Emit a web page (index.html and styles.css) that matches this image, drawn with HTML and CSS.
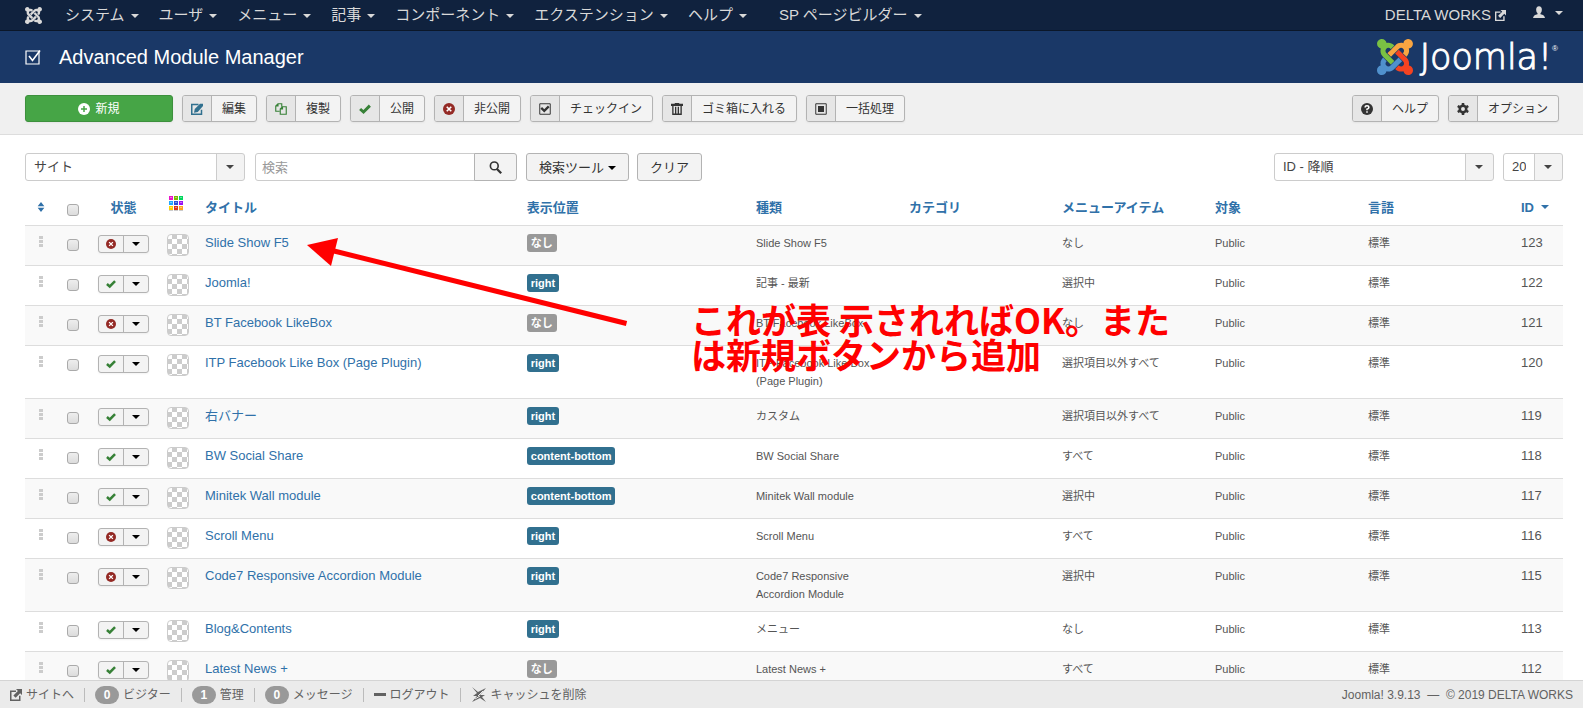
FILE: index.html
```
<!DOCTYPE html>
<html lang="ja">
  <head>
    <meta charset="utf-8">
    <meta name="viewport" content="width=device-width, initial-scale=1">
    <link rel="stylesheet" href="styles.css">
    <title>Advanced Module Manager</title>
  </head>
  <body>
    <!-- icon sprite -->
    <svg class="sprite" aria-hidden="true">
      <symbol id="i-joomla" viewBox="0 32 448 448">
        <path class="jg" d="M.6 92.1C.6 58.8 27.4 32 60.4 32c30 0 54.5 21.9 59.2 50.2 32.6-7.6 67.1.6 96.5 30l-44.3 44.3c-20.5-20.5-42.6-16.3-55.4-3.5-14.3 14.3-14.3 37.9 0 52.2l99.5 99.5-44 44.3c-87.7-87.2-49.7-49.7-99.8-99.7-26.8-26.5-35-64.8-24.8-98.9C20.4 144.6.6 120.7.6 92.1z"/>
        <path class="jo" d="M130.1 208.5l44.3 44.3c10-10 89.7-89.7 99.7-99.8 14.3-14.3 37.6-14.3 51.9 0 12.8 12.8 17 35-3.5 55.4l44 44.3c31.2-31.2 38.5-67.6 28.9-101.2 29.2-4.1 51.9-29.2 51.9-59.5 0-33.2-26.8-60.1-59.8-60.1-30.3 0-55.4 22.5-59.5 51.6-33.8-9.9-71.7-1.5-98.3 25.1-18.3 19.1-71.1 71.5-99.6 99.9z"/>
        <path class="jr" d="M396.4 360.7c8.2-32.7-.9-68.5-26.3-93.9-11.8-12.2 5 4.7-99.5-99.7l-44.3 44.3 99.7 99.7c14.3 14.3 14.3 37.6 0 51.9-12.8 12.8-35 17-55.4-3.5l-44 44.3c27.6 30.2 68 38.8 102.7 28 5.5 27.4 29.7 48.1 58.9 48.1 33 0 59.8-26.8 59.8-60.1 0-30.2-22.5-55-51.6-59.1z"/>
        <path class="jb" d="M312.1 307.6l-44-44.3c-87 86.4-50.4 50.4-99.7 99.8-14.3 14.3-37.6 14.3-51.9 0-13.1-13.4-16.9-35.3 3.2-55.4l-44-44.3c-30.2 30.2-38 65.2-29.5 98.3-26.7 6-46.2 29.9-46.2 58.2C0 453.2 26.8 480 59.8 480c28.6 0 52.5-19.8 58.6-46.7 32.7 8.2 68.5-.6 94.2-26 32.1-32 12.2-12.4 99.5-99.7z"/>
      </symbol>
      <symbol id="i-box" viewBox="0 0 16 16">
        <path fill="none" stroke="currentColor" stroke-width="1.2" d="M1 2h13v13H1z"/>
        <path fill="none" stroke="currentColor" stroke-width="1.6" d="M4 7l3.5 4.5L15 1.5"/>
      </symbol>
      <symbol id="i-plus" viewBox="0 0 16 16">
        <circle cx="8" cy="8" r="8" fill="currentColor"/>
        <path stroke="#46a546" stroke-width="2" d="M8 4v8M4 8h8"/>
      </symbol>
      <symbol id="i-edit" viewBox="0 0 16 16">
        <path fill="none" stroke="currentColor" stroke-width="2" d="M10 2H1v13h13V9"/>
        <path fill="currentColor" d="M4 13l1-5 7-7h4v3l-7 8z"/>
      </symbol>
      <symbol id="i-copy" viewBox="0 0 16 16">
        <path fill="none" stroke="currentColor" stroke-width="1.5" d="M6 11H1V4l3-3h5v4M4 1v3H1M7 8l3-3h5v10H7zM10 5v3H7"/>
      </symbol>
      <symbol id="i-check" viewBox="0 0 16 16">
        <path fill="none" stroke="currentColor" stroke-width="4" d="M1.5 8l4.5 4L14.5 3.5"/>
      </symbol>
      <symbol id="i-x" viewBox="0 0 16 16">
        <circle cx="8" cy="8" r="8" fill="currentColor"/>
        <path stroke="#fff" stroke-width="2.2" d="M5 5l6 6M11 5l-6 6"/>
      </symbol>
      <symbol id="i-checkin" viewBox="0 0 16 16">
        <path fill="none" stroke="currentColor" stroke-width="1.3" d="M1 1h14v14H1z"/>
        <path fill="none" stroke="currentColor" stroke-width="3" d="M3 6.5l4 4L13 4.5"/>
      </symbol>
      <symbol id="i-trash" viewBox="0 0 16 16">
        <path fill="currentColor" d="M5 0h6v1h5v3H0V1h5z"/>
        <path fill="none" stroke="currentColor" stroke-width="1.8" d="M2.500 4v11h11V4M6.200 5v9M9.800 5v9"/>
      </symbol>
      <symbol id="i-batch" viewBox="0 0 16 16">
        <path fill="none" stroke="currentColor" stroke-width="1.3" d="M1 1h14v14H1z"/>
        <path fill="currentColor" d="M4 4h8v8H4z"/>
      </symbol>
      <symbol id="i-help" viewBox="0 0 16 16">
        <circle cx="8" cy="8" r="8" fill="currentColor"/>
        <path fill="none" stroke="#fff" stroke-width="2" d="M5.5 6q0-2.300 2.500-2.300T10.500 6Q10.500 7.500 8 8.200v1.300M8 11v2"/>
      </symbol>
      <symbol id="i-gear" viewBox="0 0 16 16">
        <circle cx="8" cy="8" r="4.3" fill="none" stroke="currentColor" stroke-width="3.4"/>
        <path stroke="currentColor" stroke-width="3.4" d="M8 0v3M8 13v3M1 4l2.500 1.500M12.500 10.500L15 12M1 12l2.500-1.500M12.500 5.500L15 4"/>
      </symbol>
      <symbol id="i-search" viewBox="0 0 16 16">
        <circle cx="6.500" cy="6" r="4.800" fill="none" stroke="currentColor" stroke-width="2"/>
        <path stroke="currentColor" stroke-width="2.800" d="M9.500 9.500L15 15"/>
      </symbol>
      <symbol id="i-out" viewBox="0 0 16 16">
        <path fill="none" stroke="currentColor" stroke-width="2" d="M8 3H1v12h12V9"/>
        <path fill="currentColor" d="M8 0h8v8l-2.500-2.500-6 6-3-3 6-6z"/>
      </symbol>
      <symbol id="i-user" viewBox="0 0 16 16">
        <ellipse cx="8" cy="5" rx="3.800" ry="4.800" fill="currentColor"/>
        <path fill="currentColor" d="M6 8h4v3q5.500 1 6 5H0q.5-4 6-5z"/>
      </symbol>
      <symbol id="i-bolt" viewBox="0 0 16 16">
        <path fill="currentColor" d="M1 0l6 5 8-4-6 7h5l-3 2 4 5-6-4-8 4 5-6H2l4-3z"/>
        <path stroke="#ebebeb" d="M7 9L12 4M4 12L9 9"/>
      </symbol>
      <symbol id="i-sort" viewBox="0 0 8 12">
        <path fill="currentColor" d="M0 5l4-5 4 5zM0 7h8l-4 5z"/>
      </symbol>
    </svg>

    <nav class="navbar">
      <a class="brand" href="#" aria-label="Joomla"><svg class="icon-17"><use href="#i-joomla"/></svg></a>
      <ul class="nav">
        <li><a href="#">システム<b class="caret"></b></a></li>
        <li><a href="#">ユーザ<b class="caret"></b></a></li>
        <li><a href="#">メニュー<b class="caret"></b></a></li>
        <li><a href="#">記事<b class="caret"></b></a></li>
        <li><a href="#">コンポーネント<b class="caret"></b></a></li>
        <li><a href="#">エクステンション<b class="caret"></b></a></li>
        <li><a href="#">ヘルプ<b class="caret"></b></a></li>
      </ul>
      <ul class="nav nav-extra">
        <li><a href="#">SP ページビルダー<b class="caret"></b></a></li>
      </ul>
      <ul class="nav nav-right">
        <li><a href="#">DELTA WORKS <svg class="icon-11"><use href="#i-out"/></svg></a></li>
        <li><a href="#" aria-label="User"><svg class="icon-12"><use href="#i-user"/></svg><b class="caret"></b></a></li>
      </ul>
    </nav>

    <header class="header">
      <svg class="icon-16"><use href="#i-box"/></svg>
      <h1>Advanced Module Manager</h1>
      <a class="logo" href="#"><svg class="icon-36"><use href="#i-joomla"/></svg><span class="wordmark">Joomla!</span><sup>®</sup></a>
    </header>

    <div class="toolbar">
      <button class="btn-new"><svg class="icon-12"><use href="#i-plus"/></svg>新規</button>
      <button class="btn"><span class="ico blue"><svg class="icon-12"><use href="#i-edit"/></svg></span><span class="txt">編集</span></button>
      <button class="btn"><span class="ico green"><svg class="icon-12"><use href="#i-copy"/></svg></span><span class="txt">複製</span></button>
      <button class="btn"><span class="ico green"><svg class="icon-12"><use href="#i-check"/></svg></span><span class="txt">公開</span></button>
      <button class="btn"><span class="ico red"><svg class="icon-12"><use href="#i-x"/></svg></span><span class="txt">非公開</span></button>
      <button class="btn"><span class="ico"><svg class="icon-12"><use href="#i-checkin"/></svg></span><span class="txt">チェックイン</span></button>
      <button class="btn"><span class="ico"><svg class="icon-12"><use href="#i-trash"/></svg></span><span class="txt">ゴミ箱に入れる</span></button>
      <button class="btn"><span class="ico"><svg class="icon-12"><use href="#i-batch"/></svg></span><span class="txt">一括処理</span></button>
      <button class="btn push"><span class="ico"><svg class="icon-12"><use href="#i-help"/></svg></span><span class="txt">ヘルプ</span></button>
      <button class="btn"><span class="ico"><svg class="icon-12"><use href="#i-gear"/></svg></span><span class="txt">オプション</span></button>
    </div>

    <main class="content">
      <form class="filters">
        <select class="select-wide" aria-label="サイト"><option>サイト</option></select>
        <div class="search">
          <input type="text" placeholder="検索" aria-label="検索">
          <button type="button" aria-label="検索"><svg class="icon-13"><use href="#i-search"/></svg></button>
        </div>
        <div class="filter-buttons">
          <button type="button" class="btn-filter">検索ツール<b class="caret"></b></button>
          <button type="button" class="btn-filter">クリア</button>
        </div>
        <select class="select-wide push" aria-label="並び順"><option>ID - 降順</option></select>
        <select class="select-limit" aria-label="表示件数"><option>20</option></select>
      </form>

      <table class="modules">
        <colgroup>
          <col class="c-drag"><col class="c-check"><col class="c-state"><col class="c-color"><col>
          <col class="c-pos"><col class="c-info"><col class="c-info"><col class="c-info"><col class="c-info"><col class="c-info"><col class="c-id">
        </colgroup>
        <thead>
          <tr>
            <th class="center"><a href="#" aria-label="並べ替え"><svg class="sort"><use href="#i-sort"/></svg></a></th>
            <th class="center"><input type="checkbox" aria-label="すべて選択"></th>
            <th class="center"><a href="#">状態</a></th>
            <th class="center">
              <svg class="palette" viewBox="0 0 14 15">
                <path fill="#e815c8" d="M0 0h4v4H0z"/><path fill="#7ab800" d="M5 0h4v4H5z"/><path fill="#00d65c" d="M10 0h4v4h-4z"/>
                <path fill="#1fa8ff" d="M0 5h4v4H0z"/><path fill="#2a4fd8" d="M5 5h4v4H5z"/><path fill="#9b13f0" d="M10 5h4v4h-4z"/>
                <path fill="#ffd000" d="M0 10h4v4H0z"/><path fill="#d8341c" d="M5 10h4v4H5z"/><path fill="#ffa41c" d="M10 10h4v4h-4z"/>
                <path stroke="#fff" stroke-opacity=".4" d="M1 1.500h2M6 1.500h2M11 1.500h2M1 6.500h2M6 6.500h2M11 6.500h2M1 11.500h2M6 11.500h2M11 11.500h2"/>
                <path stroke="#ccc" d="M0 14.500h4M5 14.500h4M10 14.500h4"/>
              </svg>
            </th>
            <th><a href="#">タイトル</a></th>
            <th><a href="#">表示位置</a></th>
            <th><a href="#">種類</a></th>
            <th><a href="#">カテゴリ</a></th>
            <th><a href="#">メニューアイテム</a></th>
            <th><a href="#">対象</a></th>
            <th><a href="#">言語</a></th>
            <th><a href="#">ID<b class="caret"></b></a></th>
          </tr>
        </thead>
        <tbody>
          <tr>
            <td class="center"><i class="drag"></i></td>
            <td class="center"><input type="checkbox" aria-label="Slide Show F5"></td>
            <td class="center"><span class="state"><button class="red" aria-label="非公開"><svg class="icon-10"><use href="#i-x"/></svg></button><button aria-label="操作"><b class="caret"></b></button></span></td>
            <td class="center"><i class="color"></i></td>
            <td><a href="#">Slide Show F5</a></td>
            <td><span class="label none">なし</span></td>
            <td class="small">Slide Show F5</td><td></td><td class="small">なし</td><td class="small">Public</td><td class="small">標準</td><td>123</td>
          </tr>
          <tr>
            <td class="center"><i class="drag"></i></td>
            <td class="center"><input type="checkbox" aria-label="Joomla!"></td>
            <td class="center"><span class="state"><button class="green" aria-label="公開"><svg class="icon-10"><use href="#i-check"/></svg></button><button aria-label="操作"><b class="caret"></b></button></span></td>
            <td class="center"><i class="color"></i></td>
            <td><a href="#">Joomla!</a></td>
            <td><span class="label">right</span></td>
            <td class="small">記事 - 最新</td><td></td><td class="small">選択中</td><td class="small">Public</td><td class="small">標準</td><td>122</td>
          </tr>
          <tr>
            <td class="center"><i class="drag"></i></td>
            <td class="center"><input type="checkbox" aria-label="BT Facebook LikeBox"></td>
            <td class="center"><span class="state"><button class="red" aria-label="非公開"><svg class="icon-10"><use href="#i-x"/></svg></button><button aria-label="操作"><b class="caret"></b></button></span></td>
            <td class="center"><i class="color"></i></td>
            <td><a href="#">BT Facebook LikeBox</a></td>
            <td><span class="label none">なし</span></td>
            <td class="small">BT Facebook LikeBox</td><td></td><td class="small">なし</td><td class="small">Public</td><td class="small">標準</td><td>121</td>
          </tr>
          <tr>
            <td class="center"><i class="drag"></i></td>
            <td class="center"><input type="checkbox" aria-label="ITP Facebook Like Box (Page Plugin)"></td>
            <td class="center"><span class="state"><button class="green" aria-label="公開"><svg class="icon-10"><use href="#i-check"/></svg></button><button aria-label="操作"><b class="caret"></b></button></span></td>
            <td class="center"><i class="color"></i></td>
            <td><a href="#">ITP Facebook Like Box (Page Plugin)</a></td>
            <td><span class="label">right</span></td>
            <td class="small">ITP Facebook Like Box (Page Plugin)</td><td></td><td class="small">選択項目以外すべて</td><td class="small">Public</td><td class="small">標準</td><td>120</td>
          </tr>
          <tr>
            <td class="center"><i class="drag"></i></td>
            <td class="center"><input type="checkbox" aria-label="右バナー"></td>
            <td class="center"><span class="state"><button class="green" aria-label="公開"><svg class="icon-10"><use href="#i-check"/></svg></button><button aria-label="操作"><b class="caret"></b></button></span></td>
            <td class="center"><i class="color"></i></td>
            <td><a href="#">右バナー</a></td>
            <td><span class="label">right</span></td>
            <td class="small">カスタム</td><td></td><td class="small">選択項目以外すべて</td><td class="small">Public</td><td class="small">標準</td><td>119</td>
          </tr>
          <tr>
            <td class="center"><i class="drag"></i></td>
            <td class="center"><input type="checkbox" aria-label="BW Social Share"></td>
            <td class="center"><span class="state"><button class="green" aria-label="公開"><svg class="icon-10"><use href="#i-check"/></svg></button><button aria-label="操作"><b class="caret"></b></button></span></td>
            <td class="center"><i class="color"></i></td>
            <td><a href="#">BW Social Share</a></td>
            <td><span class="label">content-bottom</span></td>
            <td class="small">BW Social Share</td><td></td><td class="small">すべて</td><td class="small">Public</td><td class="small">標準</td><td>118</td>
          </tr>
          <tr>
            <td class="center"><i class="drag"></i></td>
            <td class="center"><input type="checkbox" aria-label="Minitek Wall module"></td>
            <td class="center"><span class="state"><button class="green" aria-label="公開"><svg class="icon-10"><use href="#i-check"/></svg></button><button aria-label="操作"><b class="caret"></b></button></span></td>
            <td class="center"><i class="color"></i></td>
            <td><a href="#">Minitek Wall module</a></td>
            <td><span class="label">content-bottom</span></td>
            <td class="small">Minitek Wall module</td><td></td><td class="small">選択中</td><td class="small">Public</td><td class="small">標準</td><td>117</td>
          </tr>
          <tr>
            <td class="center"><i class="drag"></i></td>
            <td class="center"><input type="checkbox" aria-label="Scroll Menu"></td>
            <td class="center"><span class="state"><button class="red" aria-label="非公開"><svg class="icon-10"><use href="#i-x"/></svg></button><button aria-label="操作"><b class="caret"></b></button></span></td>
            <td class="center"><i class="color"></i></td>
            <td><a href="#">Scroll Menu</a></td>
            <td><span class="label">right</span></td>
            <td class="small">Scroll Menu</td><td></td><td class="small">すべて</td><td class="small">Public</td><td class="small">標準</td><td>116</td>
          </tr>
          <tr>
            <td class="center"><i class="drag"></i></td>
            <td class="center"><input type="checkbox" aria-label="Code7 Responsive Accordion Module"></td>
            <td class="center"><span class="state"><button class="red" aria-label="非公開"><svg class="icon-10"><use href="#i-x"/></svg></button><button aria-label="操作"><b class="caret"></b></button></span></td>
            <td class="center"><i class="color"></i></td>
            <td><a href="#">Code7 Responsive Accordion Module</a></td>
            <td><span class="label">right</span></td>
            <td class="small">Code7 Responsive Accordion Module</td><td></td><td class="small">選択中</td><td class="small">Public</td><td class="small">標準</td><td>115</td>
          </tr>
          <tr>
            <td class="center"><i class="drag"></i></td>
            <td class="center"><input type="checkbox" aria-label="Blog&amp;Contents"></td>
            <td class="center"><span class="state"><button class="green" aria-label="公開"><svg class="icon-10"><use href="#i-check"/></svg></button><button aria-label="操作"><b class="caret"></b></button></span></td>
            <td class="center"><i class="color"></i></td>
            <td><a href="#">Blog&amp;Contents</a></td>
            <td><span class="label">right</span></td>
            <td class="small">メニュー</td><td></td><td class="small">なし</td><td class="small">Public</td><td class="small">標準</td><td>113</td>
          </tr>
          <tr>
            <td class="center"><i class="drag"></i></td>
            <td class="center"><input type="checkbox" aria-label="Latest News +"></td>
            <td class="center"><span class="state"><button class="green" aria-label="公開"><svg class="icon-10"><use href="#i-check"/></svg></button><button aria-label="操作"><b class="caret"></b></button></span></td>
            <td class="center"><i class="color"></i></td>
            <td><a href="#">Latest News +</a></td>
            <td><span class="label none">なし</span></td>
            <td class="small">Latest News +</td><td></td><td class="small">すべて</td><td class="small">Public</td><td class="small">標準</td><td>112</td>
          </tr>
        </tbody>
      </table>

      <!-- callout over the list -->
      <svg class="arrow" viewBox="0 0 322 88">
        <path stroke="#f00" stroke-width="5" d="M25 10.500L319.500 83.500"/>
        <path fill="#f00" d="M0 5L31-2 24 26z"/>
      </svg>
      <p class="note">これが表 示されればOK。または新規ボタンから追加</p>
    </main>

    <footer class="status">
      <a href="#"><svg class="icon-12"><use href="#i-out"/></svg>サイトへ</a>
      <span><b class="badge">0</b>ビジター</span>
      <span><b class="badge">1</b>管理</span>
      <a href="#"><b class="badge">0</b>メッセージ</a>
      <a href="#"><i class="minus"></i>ログアウト</a>
      <a href="#"><svg class="icon-16"><use href="#i-bolt"/></svg>キャッシュを削除</a>
      <span class="copy">Joomla! 3.9.13 &nbsp;—&nbsp; © 2019 DELTA WORKS</span>
    </footer>
  </body>
</html>
```
FILE: styles.css
```
* { box-sizing: border-box; }
body {
    margin: 0; height: 100vh; overflow: hidden;
    display: flex; flex-direction: column;
    background: #fff; color: #555;
    font-size: 13px; line-height: 18px;
}
body, button, input, select {
    font-family: "Liberation Sans", "Noto Sans CJK JP", sans-serif;
}
a { color: #3071a9; text-decoration: none; }
ul { margin: 0; padding: 0; list-style: none; }
button, select { cursor: pointer; }
svg { flex: none; }
.sprite { position: absolute; width: 0; height: 0; }
.icon-10 { width: 10px; height: 10px; }
.icon-11 { width: 11px; height: 11px; }
.icon-12 { width: 12px; height: 12px; }
.icon-13 { width: 13px; height: 13px; }
.icon-16 { width: 16px; height: 16px; }
.icon-17 { width: 17px; height: 17px; }
.icon-36 { width: 36px; height: 36px; }
.push { margin-left: auto; }
.center { text-align: center; }
.blue { color: #31708f; }
.green { color: #378137; }
.red { color: #942a25; }
.caret {
    display: inline-block; vertical-align: middle;
    border: 4px solid transparent; border-top-color: currentColor; border-bottom: 0;
}

/* top menu */
.navbar {
    flex: none; display: flex; align-items: center;
    height: 31px; padding: 0 10px 0 25px;
    background: #10223e; border-bottom: 1px solid #0b1729;
}
.navbar a { display: flex; align-items: center; color: #d9d9d9; font-size: 15px; white-space: nowrap; }
.brand { margin-right: 13px; fill: currentColor; }
.nav { display: flex; }
.nav a { padding: 0 10px; }
.nav .caret { margin-left: 6px; margin-top: 2px; }
.nav-extra { margin-left: 12px; }
.nav-right { margin-left: auto; gap: 3px; }
.nav-right svg { margin-left: 4px; }
.nav-right .caret { margin-left: 10px; }

/* page title */
.header {
    flex: none; display: flex; align-items: center;
    height: 52px; padding: 0 25px;
    background: #1a3867; color: #fff;
}
.header h1 { margin: 0 0 0 18px; font-size: 20px; font-weight: normal; }
.logo { display: flex; align-items: center; margin-left: auto; color: #fff; }
.wordmark {
    margin-left: 7px; font-family: "DejaVu Sans", sans-serif;
    font-weight: 200; font-size: 35px; line-height: 36px; -webkit-text-stroke: 1px #fff;
}
.logo sup { align-self: flex-start; font-size: 8px; line-height: 20px; }
.logo .icon-36 { --jg: #7ac143; --jo: #f9a541; --jr: #f44321; --jb: #5091cd; }
.jg { fill: var(--jg, currentColor); }
.jo { fill: var(--jo, currentColor); }
.jr { fill: var(--jr, currentColor); }
.jb { fill: var(--jb, currentColor); }

/* toolbar */
.toolbar {
    flex: none; display: flex; gap: 9px;
    padding: 12px 24px 12px 25px;
    background: #f0f0f0; border-bottom: 1px solid #ddd;
}
.toolbar button {
    display: flex; align-items: stretch; height: 27px; padding: 0;
    border: 1px solid #b3b3b3; border-radius: 3px; background: #f3f3f3; color: #333;
    font-size: 12px; line-height: 26px; white-space: nowrap; overflow: hidden;
    box-shadow: 0 1px 2px rgba(0,0,0,.05);
}
.toolbar .btn-new {
    width: 148px; align-items: center; justify-content: center; gap: 5px;
    background: #46a546; border-color: #3d903d; color: #fff;
}
.ico {
    display: flex; align-items: center; justify-content: center; width: 29px;
    background: #e6e6e6; border-right: 1px solid #b3b3b3;
}
.txt { padding: 0 10px; }

/* list area */
.content { flex: 1; min-height: 0; position: relative; overflow: hidden; padding: 18px 20px 0 25px; }
.filters { display: flex; align-items: center; margin-bottom: 9px; }
select {
    appearance: none; height: 28px; padding: 0 36px 1px 8px;
    border: 1px solid #ccc; border-radius: 3px; color: #444; font-size: 13px;
    background:
        url("data:image/svg+xml,%3Csvg xmlns='http://www.w3.org/2000/svg' width='8' height='4'%3E%3Cpath fill='%23444' d='M0 0h8L4 4z'/%3E%3C/svg%3E") right 10px center no-repeat,
        linear-gradient(#ccc, #ccc) right 27px top / 1px 100% no-repeat,
        linear-gradient(#f3f3f3, #f3f3f3) right top / 27px 100% no-repeat,
        #fff;
}
.select-wide { width: 220px; }
.select-limit { width: 60px; margin-left: 9px; }
.search { display: flex; width: 262px; margin-left: 10px; }
.search input {
    flex: 1; min-width: 0; height: 28px; padding: 0 6px;
    border: 1px solid #ccc; border-radius: 3px 0 0 3px; font-size: 13px;
}
.search input::placeholder { color: #999; }
.search button {
    display: flex; align-items: center; justify-content: center;
    width: 43px; margin-left: -1px; padding: 0;
    border: 1px solid #b3b3b3; border-radius: 0 3px 3px 0; background: #f3f3f3; color: #333;
}
.filter-buttons { display: flex; gap: 8px; margin-left: 9px; }
.btn-filter {
    height: 28px; padding: 0 12px 2px; border: 1px solid #b3b3b3; border-radius: 3px;
    background: #f3f3f3; color: #333; font-size: 13px; white-space: nowrap;
}
.btn-filter .caret { color: #000; margin-left: 4px; }

.modules { width: 100%; table-layout: fixed; border-spacing: 0; }
.c-drag { width: 31px; }
.c-check { width: 33px; }
.c-state { width: 69px; }
.c-color { width: 39px; }
.c-pos { width: 14.9%; }
.c-info { width: 9.95%; }
.c-id { width: 50px; }
.modules th { height: 35px; padding: 9px 8px 8px; text-align: left; vertical-align: top; white-space: nowrap; }
.modules td { height: 40px; padding: 8px; border-top: 1px solid #ddd; vertical-align: top; }
.modules tbody tr:nth-child(odd) td { background: #f9f9f9; }
.modules .center { padding-left: 0; padding-right: 0; text-align: center; }
.modules th .caret { margin: -4px 0 0 7px; }
.small { font-size: 11px; }
.sort { width: 8px; height: 10px; }
.palette { display: block; width: 14px; height: 15px; margin: -3px 0 0 11px; }
input[type="checkbox"] {
    appearance: none; display: block; width: 12px; height: 12px; margin: 5px auto 0;
    border: 1px solid #aaa; border-radius: 3px;
    background: linear-gradient(#eee, #dcdcdc);
}
.drag {
    display: block; width: 4px; height: 11px; margin: 2px 0 0 14px;
    background: repeating-linear-gradient(#ccc 0 3px, transparent 3px 4px);
}
.color {
    display: block; width: 22px; height: 22px; margin: 0 0 0 9px;
    border: 1px solid #ccc; border-radius: 4px;
    background: repeating-conic-gradient(#ccc 0 25%, #fff 0 50%) 0 0 / 10px 10px border-box;
}
.state {
    display: flex; width: 51px; height: 18px; margin: 1px auto 0;
    border: 1px solid #b3b3b3; border-radius: 3px; background: #f3f3f3; overflow: hidden;
    box-shadow: 0 1px 2px rgba(0,0,0,.05);
}
.state button {
    flex: 1; display: flex; align-items: center; justify-content: center;
    padding: 0; border: 0; background: none;
}
.state button + button { border-left: 1px solid #b3b3b3; color: #000; }
.label {
    display: inline-block; height: 18px; padding: 0 4px; border-radius: 3px; vertical-align: top;
    background: #31708f; color: #fff; font-size: 11px; font-weight: bold; line-height: 18px;
}
.none { background: #999; }

.arrow { position: absolute; left: 307px; top: 105px; width: 322px; height: 88px; overflow: visible; }
.note {
    position: absolute; left: 691px; top: 166px; width: 490px; margin: 0;
    color: #f00; font-family: "Noto Sans CJK JP", sans-serif;
    font-size: 35px; font-weight: bold; line-height: 35px;
}

/* status bar */
.status {
    flex: none; display: flex; align-items: center;
    height: 28px; padding: 0 10px;
    background: #ebebeb; border-top: 1px solid #d4d4d4;
    color: #626262; font-size: 12px; white-space: nowrap;
}
.status a { color: #626262; }
.status > * { display: flex; align-items: center; height: 14px; gap: 4px; padding-right: 10px; }
.status > * + * { padding-left: 10px; border-left: 1px solid #bbb; }
.status .copy { margin-left: auto; padding-right: 0; border: 0; }
.badge {
    min-width: 24px; height: 18px; border-radius: 9px;
    background: #999; color: #fff; text-align: center; line-height: 18px;
}
.minus { width: 12px; height: 3px; background: #626262; }
```
